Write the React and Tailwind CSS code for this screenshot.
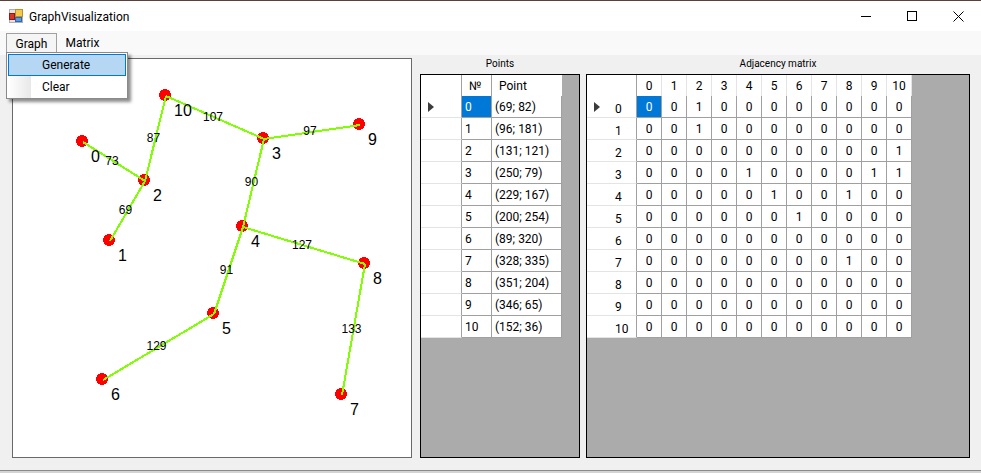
import React from 'react';

const points = [[69, 82], [96, 181], [131, 121], [250, 79], [229, 167], [200, 254], [89, 320], [328, 335], [351, 204], [346, 65], [152, 36]];
const edges = [[0, 2, 73], [1, 2, 69], [2, 10, 87], [10, 3, 107], [3, 9, 97], [3, 4, 90], [4, 8, 127], [4, 5, 91], [5, 6, 129], [8, 7, 133]];
const ones = { 0: [2], 1: [2], 2: [10], 3: [4, 9, 10], 4: [5, 8], 5: [6], 7: [8] };
const ids = [0, 1, 2, 3, 4, 5, 6, 7, 8, 9, 10];

const AppIcon = () => (
  <svg width="16" height="16" viewBox="0 0 16 16" className="shrink-0 mb-[2px]" shapeRendering="crispEdges">
    <rect x="1" y="2" width="13" height="13" fill="#e4e4e4" stroke="#b0b0b0" />
    <rect x="7" y="2" width="7" height="7" fill="#f7c948" stroke="#b8902c" />
    <rect x="1" y="6" width="5" height="6" fill="#d8342c" stroke="#8a1c18" />
    <rect x="7" y="10" width="6" height="4" fill="#5b9ae0" stroke="#2f68ac" />
  </svg>
);

const Arrow = () => (
  <svg width="6" height="10" viewBox="0 0 6 10" className="shrink-0">
    <path d="M0 0 L6 5 L0 10 Z" fill="#3c3c3c" />
  </svg>
);

const GraphCanvas = () => (
  <div className="w-[400px] h-[400px] bg-white border border-[#696969] shrink-0">
    <svg width="398" height="398" viewBox="0 0 398 398" style={{ fontFamily: '"Liberation Sans", sans-serif' }}>
      {points.map(([x, y], i) => (
        <circle key={i} cx={x} cy={y} r="6" fill="#ff0000" shapeRendering="crispEdges" />
      ))}
      {edges.map(([a, b], i) => (
        <line key={i} x1={points[a][0] + 1} y1={points[a][1] + 1} x2={points[b][0] + 1} y2={points[b][1] + 1} stroke="#80ff00" strokeWidth="2" shapeRendering="crispEdges" />
      ))}
      {edges.map(([a, b, w], i) => (
        <text key={i} x={(points[a][0] + points[b][0]) / 2 - 1} y={(points[a][1] + points[b][1]) / 2 + 4} textAnchor="middle" fontSize="12" fill="#000">{w}</text>
      ))}
      {points.map(([x, y], i) => (
        <text key={i} x={x + 9} y={y + 21} fontSize="16" fill="#000">{i}</text>
      ))}
    </svg>
  </div>
);

const PointsGrid = () => (
  <div className="w-[160px] h-[384px] border border-black bg-[#ababab] shrink-0">
    <div className="flex h-[21px] w-[141px] bg-white">
      <div className="w-[41px] border-r border-[#a0a0a0]" />
      <div className="w-[30px] border-r border-[#a0a0a0] pl-[7px] leading-[23px]">№</div>
      <div className="w-[70px] pl-[7px] leading-[23px]">Point</div>
    </div>
    {ids.map((i) => (
      <div key={i} className="flex h-[22px] w-[141px] bg-white">
        <div className="w-[41px] border-r border-b border-r-[#a0a0a0] border-b-[#e4e4e4] flex items-center pl-[7px]">
          {i === 0 && <Arrow />}
        </div>
        <div className={`w-[30px] border-r border-b border-[#a0a0a0] pl-[3px] leading-[23px] ${i === 0 ? 'bg-[#0078d7] text-white' : ''}`}>{i}</div>
        <div className="w-[70px] border-r border-b border-[#a0a0a0] pl-[3px] leading-[23px]">({points[i][0]}; {points[i][1]})</div>
      </div>
    ))}
  </div>
);

const MatrixGrid = () => (
  <div className="w-[384px] h-[384px] border border-black bg-[#ababab] shrink-0">
    <div className="flex h-[21px] w-[325px] bg-white">
      <div className="w-[50px] border-r border-[#a0a0a0]" />
      {ids.map((c) => (
        <div key={c} className="w-[25px] border-r border-[#e4e4e4] text-center leading-[23px]">{c}</div>
      ))}
    </div>
    {ids.map((r) => (
      <div key={r} className="flex h-[22px] w-[325px] bg-white">
        <div className="w-[50px] border-r border-b border-r-[#a0a0a0] border-b-[#e4e4e4] flex items-center pl-[7px]">
          <div className="w-[6px] shrink-0">{r === 0 && <Arrow />}</div>
          <span className="ml-[15px] mt-[5px]">{r}</span>
        </div>
        {ids.map((c) => (
          <div key={c} className={`w-[25px] border-r border-b border-[#a0a0a0] text-center leading-[23px] ${r === 0 && c === 0 ? 'bg-[#0078d7] text-white' : ''}`}>
            {(ones[r] || []).includes(c) ? 1 : 0}
          </div>
        ))}
      </div>
    ))}
  </div>
);

export default function App() {
  return (
    <div className="relative w-[981px] h-[473px] flex flex-col overflow-hidden bg-[#f0f0f0] text-[12px] text-black border-t border-[#5a4038]" style={{ fontFamily: 'Roboto, "Open Sans", sans-serif' }}>
      {/* Title bar */}
      <div className="h-[30px] bg-white flex items-center justify-between shrink-0">
        <div className="flex items-center gap-[5px] pl-[8px]">
          <AppIcon />
          <span className="text-[12px] mt-[1px]">GraphVisualization</span>
        </div>
        <div className="flex items-center">
          <div className="w-[46px] h-[30px] flex items-center justify-center">
            <div className="w-[10px] h-px bg-black" />
          </div>
          <div className="w-[46px] h-[30px] flex items-center justify-center">
            <div className="w-[10px] h-[10px] border border-black" />
          </div>
          <div className="w-[46px] h-[30px] flex items-center justify-center">
            <svg width="11" height="11" viewBox="0 0 11 11"><path d="M0.5 0.5 L10.5 10.5 M10.5 0.5 L0.5 10.5" stroke="#000" strokeWidth="1" /></svg>
          </div>
        </div>
      </div>

      {/* Menu bar */}
      <div className="h-[24px] bg-[#f9f9f9] flex items-start pl-[6px] pt-[2px] shrink-0">
        <div className="w-[51px] h-[21px] bg-[#f5f5f5] border border-b-0 border-[#a0a0a0] text-center leading-[20px]">Graph</div>
        <div className="w-[51px] h-[21px] text-center leading-[20px]">Matrix</div>
      </div>

      {/* Content */}
      <div className="flex pl-[12px] pt-[3px]">
        <GraphCanvas />
        <div className="ml-[8px] flex flex-col">
          <div className="h-[12px] w-[160px] text-center text-[10px] leading-[12px]">Points</div>
          <div className="mt-[4px]"><PointsGrid /></div>
        </div>
        <div className="ml-[6px] flex flex-col">
          <div className="h-[12px] w-[384px] text-center text-[10px] leading-[12px]">Adjacency matrix</div>
          <div className="mt-[4px]"><MatrixGrid /></div>
        </div>
      </div>

      {/* Bottom window edge */}
      <div className="absolute left-0 right-0 bottom-0 h-[3px] bg-[#d4d4d4] border-t border-[#8a8a8a]" />

      {/* Dropdown */}
      <div className="absolute left-[6px] top-[51px] w-[122px] h-[47px] bg-white border border-[#8a8a8a] p-px shadow-[3px_3px_3px_rgba(0,0,0,0.45)]">
        <div className="h-[22px] bg-[#b5d7f3] border border-[#0078d7] pl-[33px] leading-[20px]">Generate</div>
        <div className="h-[22px] flex">
          <div className="w-[23px] bg-gradient-to-r from-white to-[#e8e8e8]" />
          <div className="pl-[11px] leading-[22px]">Clear</div>
        </div>
      </div>
    </div>
  );
}
